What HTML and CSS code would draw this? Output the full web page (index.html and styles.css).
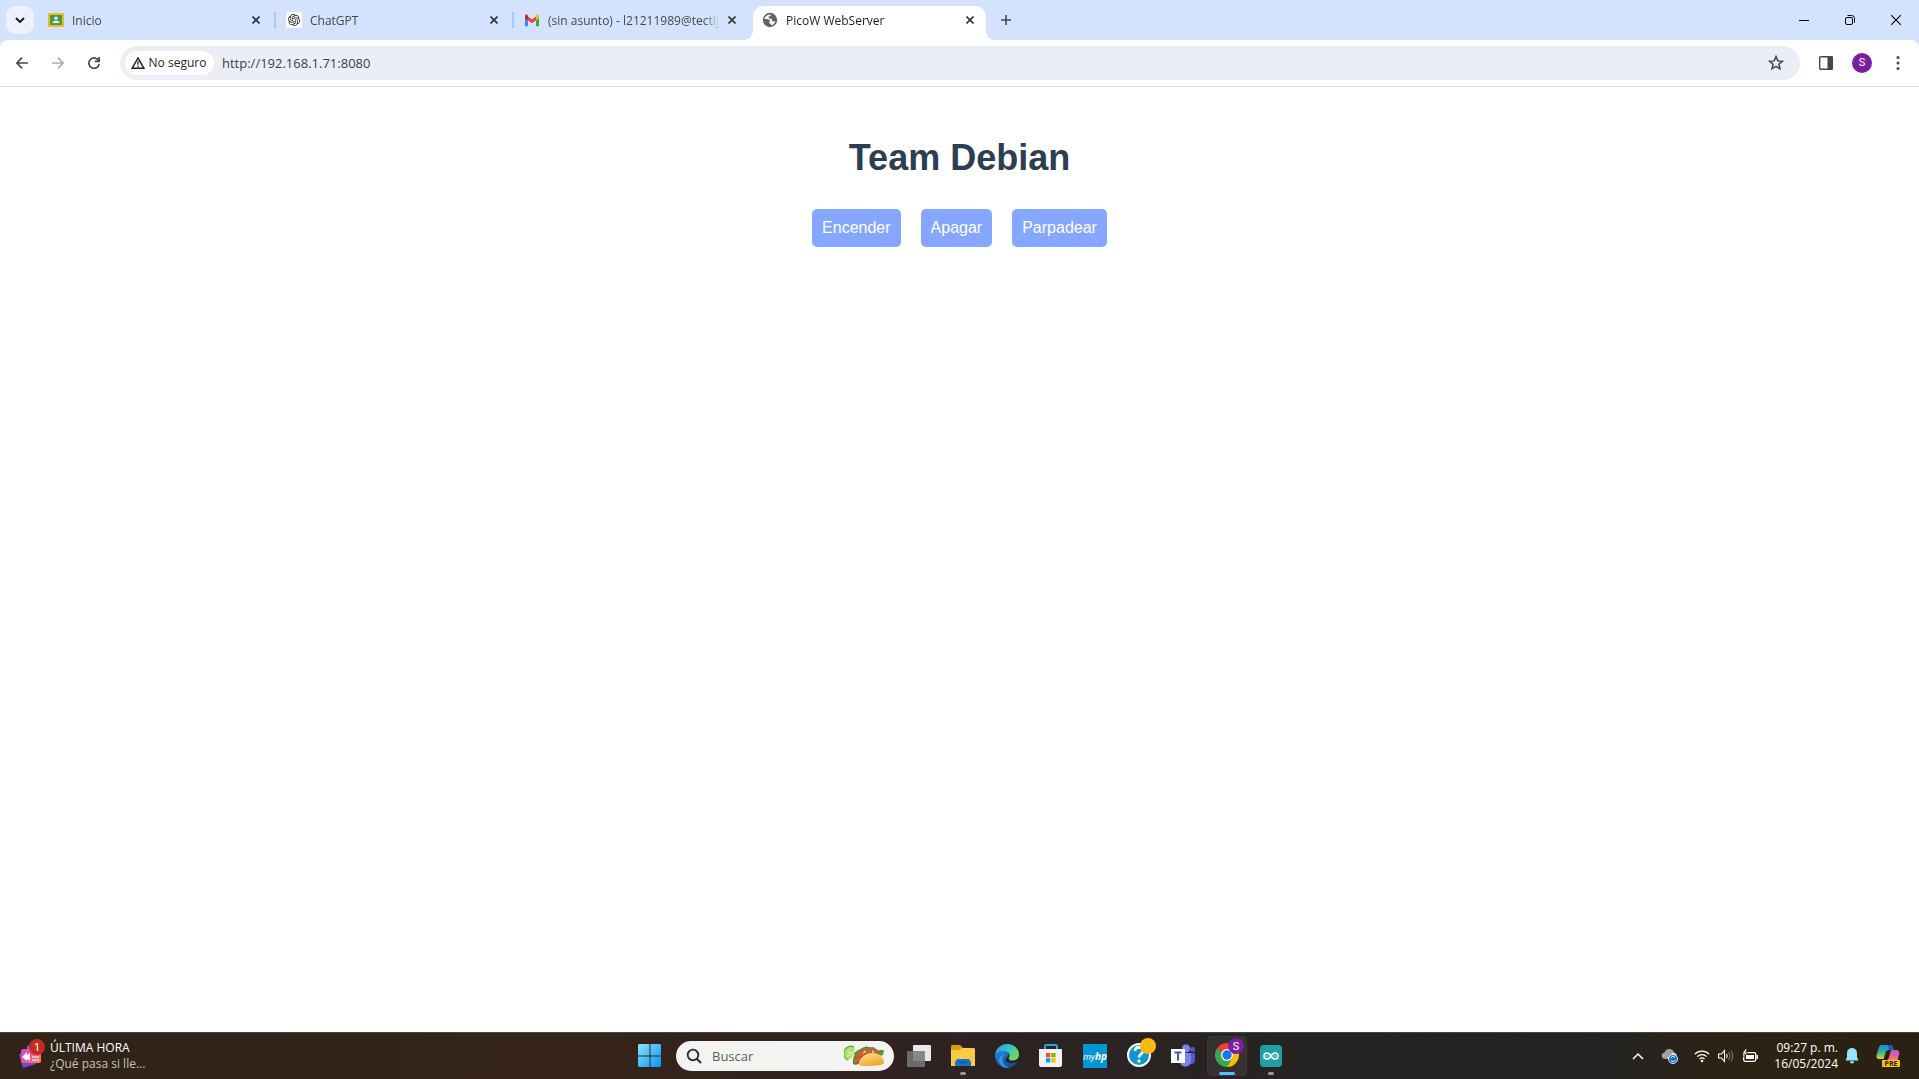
FILE: index.html
```html
<!DOCTYPE html>
<html lang="es">
<head>
<meta charset="utf-8">
<title>PicoW WebServer</title>
<link rel="stylesheet" href="styles.css">
</head>
<body>
<header class="browser">
  <div class="tabstrip">
    <button class="tab-search" aria-label="Buscar pestañas"><svg width="10" height="6" viewBox="0 0 10 6"><path d="M1 1l4 4 4-4" fill="none" stroke="#1f1f1f" stroke-width="2"/></svg></button>
    <nav class="tabs" aria-label="Pestañas">
      <div class="tab">
        <svg class="favicon" viewBox="0 0 16 16"><rect y="1" width="16" height="14" rx="1" fill="#f5ba15"/><rect x="2" y="3" width="12" height="10" fill="#3f9b58"/><circle cx="8" cy="6.2" r="1.6" fill="#fff"/><path d="M4.5 11c0-3 7-3 7 0z" fill="#fff"/></svg>
        <a class="tab-title" href="#inicio">Inicio</a>
        <button class="close" aria-label="Cerrar Inicio"><svg width="8" height="8" viewBox="0 0 8 8"><path d="M.5.5l7 7m0-7l-7 7"/></svg></button>
      </div>
      <div class="tab">
        <svg class="favicon" viewBox="0 0 32 32"><rect width="32" height="32" rx="4" fill="#fff"/><path transform="translate(4 4)" fill="#222" d="M22.282 9.821a5.985 5.985 0 0 0-.516-4.910 6.046 6.046 0 0 0-6.510-2.900A6.065 6.065 0 0 0 4.981 4.182a5.985 5.985 0 0 0-3.998 2.900 6.046 6.046 0 0 0 .743 7.097 5.980 5.980 0 0 0 .511 4.911 6.051 6.051 0 0 0 6.515 2.900A5.985 5.985 0 0 0 13.260 24a6.056 6.056 0 0 0 5.772-4.206 5.990 5.990 0 0 0 3.998-2.900 6.056 6.056 0 0 0-.747-7.073zM13.260 22.430a4.476 4.476 0 0 1-2.876-1.041l.142-.080 4.778-2.758a.795.795 0 0 0 .393-.681v-6.737l2.020 1.169a.071.071 0 0 1 .038.052v5.583a4.504 4.504 0 0 1-4.495 4.494zM3.600 18.304a4.471 4.471 0 0 1-.535-3.014l.142.085 4.783 2.759a.771.771 0 0 0 .781 0l5.843-3.369v2.332a.080.080 0 0 1-.033.062L9.740 19.950a4.499 4.499 0 0 1-6.140-1.646zM2.341 7.896a4.485 4.485 0 0 1 2.366-1.973v5.678a.766.766 0 0 0 .388.677l5.814 3.354-2.020 1.169a.076.076 0 0 1-.071 0l-4.830-2.787A4.504 4.504 0 0 1 2.341 7.872zm16.597 3.855l-5.843-3.387L15.114 7.200a.076.076 0 0 1 .071 0l4.830 2.792a4.494 4.494 0 0 1-.676 8.104v-5.677a.790.790 0 0 0-.401-.668zm2.010-3.023l-.142-.085-4.774-2.782a.776.776 0 0 0-.785 0L9.409 9.230V6.897a.066.066 0 0 1 .028-.061l4.830-2.787a4.499 4.499 0 0 1 6.681 4.660zM8.307 12.863l-2.020-1.164a.080.080 0 0 1-.038-.057V6.074a4.499 4.499 0 0 1 7.376-3.453l-.142.080-4.778 2.758a.795.795 0 0 0-.393.681zm1.098-2.365l2.602-1.500 2.607 1.500v2.999l-2.598 1.500-2.607-1.500z"/></svg>
        <a class="tab-title" href="#chatgpt">ChatGPT</a>
        <button class="close" aria-label="Cerrar ChatGPT"><svg width="8" height="8" viewBox="0 0 8 8"><path d="M.5.5l7 7m0-7l-7 7"/></svg></button>
      </div>
      <div class="tab">
        <svg class="favicon" viewBox="0 0 16 16"><path d="M1 4v10.200h3V7z" fill="#4285f4"/><path d="M15 4v10.200h-3V7z" fill="#34a853"/><path d="M12 4.600V8.300l3-2.300V4c0-1.700-1.700-2-2.400-1.300z" fill="#fbbc04"/><path d="M4 8.300V4.400l4 3 4-3v3.900l-4 3z" fill="#ea4335"/><path d="M1 4v2l3 2.300V4.400L3.400 2.800C2.600 2.100 1 2.500 1 4z" fill="#c5221f"/></svg>
        <a class="tab-title" href="#correo">(sin asunto) - l21211989@tectij</a>
        <button class="close" aria-label="Cerrar correo"><svg width="8" height="8" viewBox="0 0 8 8"><path d="M.5.5l7 7m0-7l-7 7"/></svg></button>
      </div>
      <div class="tab active">
        <svg class="favicon" viewBox="0 0 16 16"><circle cx="8" cy="8" r="7.200" fill="#5f6368"/><path d="M8.800 2.400l-.3 1.500-1.700.5-.4 1.500 1 .7 2.100.1.800 1.200-.5 1.500 2-.1 1.500.1c-.6 1.900-2 3.300-4.200 4.100l-.2-1.700-1.400-.4-.2-1.800 1.200-1-2.300-1.300L2.500 7C2.900 4.500 5.400 2.300 8.800 2.400z" fill="#fff"/><path d="M10.500 3.200l2.800 3-1.200.8-1.500-1zM2.500 8.500l3 1 .5 3.500c-1.800-.5-3.400-2.300-3.500-4.500z" fill="#5f6368"/></svg>
        <a class="tab-title" href="#picow" aria-current="page">PicoW WebServer</a>
        <button class="close" aria-label="Cerrar PicoW WebServer"><svg width="8" height="8" viewBox="0 0 8 8"><path d="M.5.5l7 7m0-7l-7 7"/></svg></button>
      </div>
    </nav>
    <button class="new-tab" aria-label="Nueva pestaña"><svg width="10" height="10" viewBox="0 0 10 10"><path d="M5 0v10M0 5h10" stroke="#474747" stroke-width="1.600"/></svg></button>
    <div class="window-controls">
      <button aria-label="Minimizar"><svg width="10" height="10" viewBox="0 0 10 10"><path d="M0 5.500h10" stroke="#000"/></svg></button>
      <button aria-label="Restaurar"><svg width="10" height="10" viewBox="0 0 10 10"><path d="M2.500.5h4a3 3 0 0 1 3 3v4" fill="none" stroke="#000"/><rect x=".5" y="2.500" width="7" height="7" rx="1.500" fill="none" stroke="#000"/></svg></button>
      <button aria-label="Cerrar"><svg width="10" height="10" viewBox="0 0 10 10"><path d="M0 0l10 10M10 0L0 10" stroke="#000" stroke-width="1.100"/></svg></button>
    </div>
  </div>
  <div class="toolbar">
    <div class="tools">
      <button aria-label="Atrás"><svg width="12" height="12" viewBox="0 0 12 12"><path d="M6 .7L.9 6 6 11.300M1 6h11" fill="none" stroke="#474747" stroke-width="1.700"/></svg></button>
      <button aria-label="Adelante"><svg width="12" height="12" viewBox="0 0 12 12"><path d="M6 .7L11.100 6 6 11.300M11 6H0" fill="none" stroke="#adadad" stroke-width="1.700"/></svg></button>
      <button aria-label="Recargar"><svg width="12" height="12" viewBox="0 0 12 12"><path d="M10.700 3.800A5.200 5.200 0 1 0 11.200 7" fill="none" stroke="#474747" stroke-width="1.700"/><path d="M12 0v5.200H6.800V3.600h3.500V0z" fill="#474747"/></svg></button>
    </div>
    <form class="omnibox">
      <button type="button" class="security"><svg width="14" height="12" viewBox="0 0 14 12"><path d="M7 1L1.200 11.200h11.600z" fill="none" stroke="#1f1f1f" stroke-width="1.500"/><path d="M7 4.300v3.500M7 8.800v1.300" stroke="#1f1f1f" stroke-width="1.300"/></svg>No seguro</button>
      <input class="url" type="text" aria-label="Dirección" value="http://192.168.1.71:8080">
      <button type="button" class="star" aria-label="Añadir a marcadores"><svg width="16" height="16" viewBox="0 0 16 16"><path d="M8 1.600l1.800 4.300 4.600.4-3.500 3 1.100 4.500-4-2.400-4 2.400 1.100-4.500-3.500-3 4.600-.4z" fill="none" stroke="#474747" stroke-width="1.500"/></svg></button>
    </form>
    <div class="tools">
      <button aria-label="Panel lateral"><svg width="14" height="14" viewBox="0 0 14 14"><rect x=".7" y=".7" width="12.600" height="12.600" rx="1" fill="none" stroke="#474747" stroke-width="1.400"/><path d="M8.500 0H13l1 1v12l-1 1H8.500z" fill="#474747"/></svg></button>
      <button aria-label="Perfil"><span class="avatar">S</span></button>
      <button aria-label="Menú"><svg width="4" height="14" viewBox="0 0 4 14" fill="#474747"><circle cx="2" cy="1.600" r="1.500"/><circle cx="2" cy="7" r="1.500"/><circle cx="2" cy="12.400" r="1.500"/></svg></button>
    </div>
  </div>
</header>

<main class="page">
  <h1>Team Debian</h1>
  <div class="actions">
    <button>Encender</button>
    <button>Apagar</button>
    <button>Parpadear</button>
  </div>
</main>

<footer class="taskbar">
  <button class="news">
    <svg width="28" height="30" viewBox="0 0 28 30"><defs><linearGradient id="news" x2="1" y2="1"><stop stop-color="#d646c8"/><stop offset=".5" stop-color="#f64f8e"/><stop offset="1" stop-color="#ff8a3c"/></linearGradient></defs><path d="M9 7l10-3 3 18-12 3z" fill="#2d8ce5"/><path d="M1 15l12-3 5 13-13 4z" fill="#6c4be0"/><rect x="3" y="10" width="20" height="14" rx="2" fill="url(#news)"/><path d="M4 18l5-5v3l3-2v8l-3-2v2z" fill="#fff"/><path d="M14 18h7M14 21h7" stroke="#ffd3d9" stroke-width="1.500"/><circle cx="19" cy="8" r="8" fill="#c42b1c"/><text x="19" y="12" text-anchor="middle" class="badge-text">1</text></svg>
    <span class="news-text"><span>ÚLTIMA HORA</span><span class="dim">¿Qué pasa si lle...</span></span>
  </button>
  <div class="apps">
    <button class="app" aria-label="Inicio"><svg width="24" height="24" viewBox="0 0 24 24"><defs><linearGradient id="win" x2="1" y2="1"><stop stop-color="#8be4ff"/><stop offset="1" stop-color="#0494fa"/></linearGradient></defs><path d="M1 0h10.500v11.500H0V1zM12.500 0H22l1 1v10.500H12.500zM0 12.500h11.500V23H1l-1-1zM12.500 12.500H23V22l-1 1h-9.500z" fill="url(#win)"/></svg></button>
    <label class="search">
      <svg width="16" height="16" viewBox="0 0 16 16"><circle cx="7" cy="7" r="5.300" fill="none" stroke="#2b2b2b" stroke-width="1.800"/><path d="M11 11l4 4" stroke="#2b2b2b" stroke-width="2"/></svg>
      <input type="text" placeholder="Buscar" aria-label="Buscar">
      <svg width="42" height="22" viewBox="0 0 42 22"><defs><linearGradient id="taco" y2="1" x2=".6"><stop stop-color="#ffe596"/><stop offset="1" stop-color="#eda727"/></linearGradient></defs><path d="M10 2A7 7 0 0 0 4 15c4-1 7-6 6-13z" fill="#b4e070"/><path d="M10 2A7 7 0 0 0 4 15" fill="none" stroke="#6db544" stroke-width="1.500"/><path d="M4 7l5 1M3 11l5-2" stroke="#e5f7b4"/><path d="M9 19C8 10 14 2 24 2c8 0 12 4 13 8l-6 1-19 9z" fill="#a85e2a"/><path d="M10 8l4-3 2 3-4 5zM18 3l5-2 1 4-5 1zM35 5l5 0-1 5-4 1zM9 14l3-2 1 5-3 2zM26 3l4-1 1 4-3 1z" fill="#4d9b32"/><path d="M14 7l4-2 3 3-6 5zM23 3l4 1 2 3-6 1zM11 15l3-3 2 3-3 3zM30 5l4 2-1 3-3-1z" fill="#e2553a"/><path d="M20 5l3 2-4 2zM28 5l3 2-3 1z" fill="#ffb18a"/><path d="M15 20c-1-5 5-12 13-12 8 0 12 5 12 10 0 3-22 4-25 2z" fill="url(#taco)"/></svg>
    </label>
    <button class="app" aria-label="Vista de tareas"><svg width="24" height="24" viewBox="0 0 24 24"><rect x="6" y="1" width="18" height="16" rx="1" fill="#e9e9e9"/><rect y="7" width="18" height="16" rx="1" fill="#777" fill-opacity=".86"/></svg></button>
    <button class="app open" aria-label="Explorador de archivos"><svg width="24" height="24" viewBox="0 0 24 24"><path d="M0 4V2l1-1h8l3 3-3 3H0z" fill="#dd9b08"/><path d="M0 6h8l3-2h12l1 1v17H0z" fill="#ffca43"/><path d="M4 22v-4l2-3h12l2 3v4z" fill="#1677c7"/><path d="M8 18.500h8" stroke="#0b57a4" stroke-width="1.500"/></svg></button>
    <button class="app" aria-label="Edge"><svg width="24" height="24" viewBox="0 0 24 24"><defs><linearGradient id="edgeTop" x2="1" y2=".5"><stop stop-color="#249edc"/><stop offset=".55" stop-color="#30bfcf"/><stop offset="1" stop-color="#6edb57"/></linearGradient><linearGradient id="edgeLow" x2=".6" y2="1"><stop stop-color="#238ad8"/><stop offset="1" stop-color="#174c9a"/></linearGradient></defs><path d="M0 11C1 4 6 0 12 0c7 0 12 5 12 10.500 0 4-3 6-6 6-3.500 0-5-1.500-4-3 2-3-1-6-5-6-4 0-8 2-9 3.500z" fill="url(#edgeTop)"/><path d="M0 11c1-3 5-5 9-4 3 .5 5 3 4.500 5C7 15 12 21 19 19l3.300-1C20 22 16 24 12 24 5 24 0 18 0 11z" fill="url(#edgeLow)"/><path d="M9 10c-4 5-1 12 5 14-5 .5-10-3-10-8 0-3 2-5 5-6z" fill="#2a9de0"/></svg></button>
    <button class="app" aria-label="Microsoft Store"><svg width="24" height="24" viewBox="0 0 24 24"><path d="M6 5V2l1-1h10l1 1v3" fill="none" stroke="#22a7ea" stroke-width="2"/><path d="M0 5h23v16c0 1-1 2-2 2H2c-1 0-2-1-2-2z" fill="#f2f2f2"/><path d="M7 9h4.300v4.300H7z" fill="#f25022"/><path d="M12.300 9h4.300v4.300h-4.300z" fill="#7fba00"/><path d="M7 14.200h4.300v4.300H7z" fill="#00a4ef"/><path d="M12.300 14.200h4.300v4.300h-4.300z" fill="#ffb900"/></svg></button>
    <button class="app" aria-label="myHP"><span class="hp">my<b>hp</b></span></button>
    <button class="app" aria-label="Ayuda"><svg class="wide" width="30" height="30" viewBox="0 0 30 30"><circle cx="12" cy="17" r="11" fill="#0e96d5" stroke="#fff" stroke-width="2"/><path d="M8 13c0-5 8-5 8 0 0 3-4 3-4 6.500" fill="none" stroke="#fff" stroke-width="2.800"/><circle cx="12" cy="23" r="1.700" fill="#fff"/><circle cx="21" cy="8" r="8" fill="#ffb80f"/></svg></button>
    <button class="app" aria-label="Teams"><svg width="24" height="24" viewBox="0 0 24 24"><circle cx="15" cy="4.500" r="4" fill="#7b83eb"/><circle cx="21.500" cy="5.500" r="2.500" fill="#5059c9"/><path d="M17 9h7v7c0 4-3 5-7 4z" fill="#5059c9"/><path d="M9 9h11v8c0 7-11 8-11 0z" fill="#7b83eb"/><path d="M0 5h14v14H0z" fill="#fff"/><path d="M3.500 8.500h7M7 8.500v8" stroke="#4b53bc" stroke-width="2"/></svg></button>
    <button class="app current" aria-label="Chrome"><svg class="wide" width="30" height="30" viewBox="0 0 30 30"><path d="M1.600 11A12 12 0 0 1 22.400 11L12 17z" fill="#ea4335"/><path d="M1.600 11A12 12 0 0 0 12 29l5.200-9L12 17z" fill="#34a853"/><path d="M12 29A12 12 0 0 0 22.400 11H12l5.200 9z" fill="#fbbc04"/><circle cx="12" cy="17" r="6" fill="#fff"/><circle cx="12" cy="17" r="4.700" fill="#1a73e8"/><circle cx="21" cy="8" r="8" fill="#7b1fa2"/><text x="21" y="12" text-anchor="middle" class="badge-text">S</text></svg></button>
    <button class="app open" aria-label="Arduino IDE"><svg width="24" height="24" viewBox="0 0 24 24"><rect x="1" y="1" width="22" height="22" rx="4" fill="#219fa3"/><path d="M12 12c-2-4-7-4-7 0s5 4 7 0c2-4 7-4 7 0s-5 4-7 0z" fill="none" stroke="#e9f7f7" stroke-width="1.700"/><path d="M7 12h2M15 12h2" stroke="#e9f7f7"/></svg></button>
  </div>
  <div class="tray">
    <button class="tray-icon" aria-label="Iconos ocultos"><svg width="12" height="8" viewBox="0 0 12 8"><path d="M1 7l5-5 5 5" fill="none" stroke="#fff" stroke-width="1.500"/></svg></button>
    <button class="tray-icon" aria-label="OneDrive"><svg width="18" height="16" viewBox="0 0 18 16"><path d="M3.500 11a3.300 3.300 0 0 1 0-6.500 5 5 0 0 1 9.500 0 3.500 3.500 0 0 1 1 6.500z" fill="#a3a19e"/><path d="M6 11l6-6.500a3.500 3.500 0 0 1 3 5z" fill="#dcdcdc"/><circle cx="12" cy="11" r="4.500" fill="#1769bd" stroke="#e6eef5"/><path d="M9.700 10.300a2.500 2.500 0 0 1 4.200-1M14.300 11.700a2.500 2.500 0 0 1-4.200 1" fill="none" stroke="#fff"/></svg></button>
    <button class="quick" aria-label="Red, volumen y batería">
      <svg width="16" height="14" viewBox="0 0 16 14"><g fill="none" stroke="#fff" stroke-width="1.200"><path d="M.8 5.200a10.200 10.200 0 0 1 14.400 0M3.200 7.700a6.800 6.800 0 0 1 9.600 0M5.500 10a3.600 3.600 0 0 1 5 0"/></g><circle cx="8" cy="12" r="1.300" fill="#fff"/></svg>
      <svg width="16" height="14" viewBox="0 0 16 14" fill="none" stroke="#fff" stroke-width="1.100"><path d="M.6 5h2.900l3-3.500v11L3.500 9H.6zM8.500 5a3.500 3.500 0 0 1 0 4"/><path d="M10.500 3.200a6 6 0 0 1 0 7.600M12.800 1.500a8.500 8.500 0 0 1 0 11" stroke="#777"/></svg>
      <svg width="16" height="14" viewBox="0 0 16 14"><rect x="1.700" y="3.700" width="12" height="8.600" rx="1.500" fill="none" stroke="#fff" stroke-width="1.300"/><path d="M4 6h8v4H4z" fill="#fff"/><path d="M15.200 6v4" stroke="#fff" stroke-width="1.500"/><path d="M3.500 0L.3 4.500H2.500L1.500 8 5.500 3.500H3.500L5 0z" fill="#fff" stroke="#2c2317" stroke-width=".5"/></svg>
    </button>
    <button class="clock"><span>09:27 p. m.</span><span>16/05/2024</span></button>
    <button class="bell" aria-label="Notificaciones"><svg width="14" height="16" viewBox="0 0 14 16"><path d="M7 0a5 5 0 0 0-5 5v4L.5 12.500h13L12 9V5a5 5 0 0 0-5-5zM4.800 13.300a2.200 2.200 0 0 0 4.400 0z" fill="#95e5ff"/></svg></button>
    <button class="copilot" aria-label="Copilot"><svg width="24" height="24" viewBox="0 0 24 24"><defs><linearGradient id="cpA" x2="0" y2="1"><stop stop-color="#1788e8"/><stop offset=".5" stop-color="#3cae8c"/><stop offset="1" stop-color="#e5d31c"/></linearGradient><linearGradient id="cpB" x2="0" y2="1"><stop stop-color="#a75ae8"/><stop offset=".5" stop-color="#ef5d91"/><stop offset="1" stop-color="#ff9c4c"/></linearGradient></defs><path d="M5 1h9c2 0 3 2 3.500 5H13c-2 0-3 1-3.500 3L7.500 15H3c-2 0-3-1.500-2.500-4L3 3c.5-1 1-2 2-2z" fill="url(#cpA)"/><path d="M12 1h2c2 0 3 2 3.500 5H13z" fill="#2456c4"/><path d="M15 6h5c3 0 4 2 3 5l-2 7H9c3 0 3-2 4-5z" fill="url(#cpB)"/><rect x="6" y="16" width="18" height="7" rx="1" fill="#ffc20a"/><text x="15" y="22" text-anchor="middle" class="pre">PRE</text></svg></button>
  </div>
</footer>
</body>
</html>
```

FILE: styles.css
```css
* { box-sizing: border-box; }

body {
  margin: 0;
  min-height: 100vh;
  display: flex;
  flex-direction: column;
  background: #fff;
  font: 12px/16px "Open Sans", "Noto Sans", sans-serif;
}

button, input { font: inherit; color: inherit; }

button {
  display: flex;
  align-items: center;
  justify-content: center;
  padding: 0;
  border: 0;
  background: none;
}

svg { display: block; flex: none; }

/* Browser window */
.browser { background: #d3e3fd; }

.tabstrip {
  display: flex;
  align-items: center;
  height: 40px;
  padding-left: 6px;
}

.tab-search {
  width: 28px;
  height: 28px;
  margin-right: 5px;
  border-radius: 10px;
  background: #ebf2fe;
}

.tabs {
  display: flex;
  gap: 5px;
  align-self: stretch;
  padding-top: 6px;
}

.tab {
  position: relative;
  display: flex;
  align-items: center;
  gap: 8px;
  width: 233px;
  height: 34px;
  padding: 0 8px 6px 9px;
  color: #474747;
}

.tab:nth-child(-n+2)::after {
  content: "";
  position: absolute;
  right: -4px;
  top: 6px;
  width: 2px;
  height: 16px;
  background: #a8c7fa;
}

.tab.active {
  border-radius: 10px 10px 0 0;
  background: #fff;
  color: #1f1f1f;
}

.tab.active::before, .tab.active::after {
  content: "";
  position: absolute;
  bottom: 0;
  width: 10px;
  height: 10px;
}

.tab.active::before {
  left: -10px;
  background: radial-gradient(circle at 0 0, transparent 10px, #fff 10px);
}

.tab.active::after {
  right: -10px;
  background: radial-gradient(circle at 100% 0, transparent 10px, #fff 10px);
}

.favicon { width: 16px; height: 16px; }

.tab-title {
  flex: 1;
  padding-top: 2px;
  overflow: hidden;
  white-space: nowrap;
  color: inherit;
  text-decoration: none;
  mask-image: linear-gradient(to left, transparent, #000 16px);
}

.close { width: 16px; height: 16px; margin-left: -4px; }
.close path { stroke: #333; stroke-width: 1.6; }

.new-tab { width: 28px; height: 28px; margin-left: 6px; }

.window-controls {
  display: flex;
  align-self: stretch;
  margin-left: auto;
}

.window-controls button { width: 46px; }

.toolbar {
  display: flex;
  align-items: center;
  gap: 8px;
  height: 47px;
  padding: 0 3px 0 4px;
  border-bottom: 1px solid #dedede;
  border-radius: 8px 8px 0 0;
  background: #fff;
}

.tools { display: flex; }
.tools button { width: 36px; height: 34px; }

.avatar {
  width: 20px;
  height: 20px;
  border-radius: 50%;
  background: #7b1fa2;
  color: #fff;
  font: 11px/20px Roboto, sans-serif;
}

.omnibox {
  flex: 1;
  display: flex;
  align-items: center;
  height: 34px;
  padding: 0 6px 0 5px;
  border-radius: 17px;
  background: #ebeef7;
}

.security {
  gap: 4px;
  width: 89px;
  height: 24px;
  padding-right: 2px;
  border-radius: 12px;
  background: #fff;
  color: #1f1f1f;
}

.url {
  flex: 1;
  padding: 0 8px;
  border: 0;
  outline: 0;
  background: none;
  color: #3c4043;
  font-size: 13px;
}

.star { width: 36px; height: 34px; }

/* Web page */
.page {
  flex: 1;
  padding-top: 50px;
  font-family: "Liberation Sans", Arial, sans-serif;
  text-align: center;
}

.page h1 {
  margin: 0 0 31px;
  color: #2c3e50;
  font-size: 36px;
  line-height: 41px;
}

.actions {
  display: flex;
  justify-content: center;
  gap: 20px;
}

.actions button {
  padding: 10px;
  border-radius: 5px;
  background: #85a7ff;
  color: #fff;
  font-size: 16px;
  line-height: 18px;
}

/* Taskbar */
.taskbar {
  display: grid;
  grid-template-columns: 1fr auto 1fr;
  height: 47px;
  border-top: 1px solid #4b4541;
  background: linear-gradient(90deg, #302318, #362418 30%, #2e2222 50%, #252423 70%, #242322 84%, #2d2314 90%, #2b2112);
  color: #fff;
}

.news { justify-self: start; gap: 4px; padding-left: 18px; }
.news svg { margin-bottom: 4px; }

.news-text {
  display: flex;
  flex-direction: column;
  text-align: left;
}

.dim { color: #c9c4bf; }

.badge-text { font: 11px Roboto, sans-serif; fill: #fff; }

.apps { display: flex; align-items: center; padding-left: 2px; }

.app {
  position: relative;
  width: 44px;
  height: 46px;
}

.wide { margin: -6px 0 0 6px; }

.open::after, .current::after {
  content: "";
  position: absolute;
  bottom: 4px;
  left: 19px;
  width: 6px;
  height: 3px;
  border-radius: 2px;
  background: #9c9693;
}

.current::after { left: 14px; width: 16px; background: #4cc2ff; }

.current::before {
  content: "";
  position: absolute;
  inset: 3px 2px;
  border: 1px solid #3b3836;
  border-radius: 4px;
  background: #343130;
}

.current svg { position: relative; }

.search {
  display: flex;
  align-items: center;
  gap: 10px;
  width: 218px;
  height: 30px;
  margin: 0 3px 0 4px;
  padding: 0 8px 0 10px;
  border-radius: 15px;
  background: #f3f3f2;
}

.search input {
  flex: 1;
  min-width: 0;
  padding: 0;
  border: 0;
  outline: 0;
  background: none;
  color: #5d5d5d;
  font-size: 13px;
}

.search input::placeholder { color: #5d5d5d; opacity: 1; }

.hp {
  width: 24px;
  height: 24px;
  background: #0096d6;
  font: italic 9px/24px "Open Sans", sans-serif;
}

.hp b { font-size: 10px; }

.tray {
  display: flex;
  align-items: center;
  justify-self: end;
  padding-right: 9px;
}

.tray button { height: 46px; }
.tray-icon { width: 32px; }
.tray .quick { gap: 8px; width: 72px; margin-left: 4px; }

.tray .clock {
  flex-direction: column;
  align-items: flex-end;
  width: 76px;
}

.bell { width: 28px; }
.copilot { width: 44px; }
.pre { font: bold 7px "Open Sans", sans-serif; fill: #222; }
```
